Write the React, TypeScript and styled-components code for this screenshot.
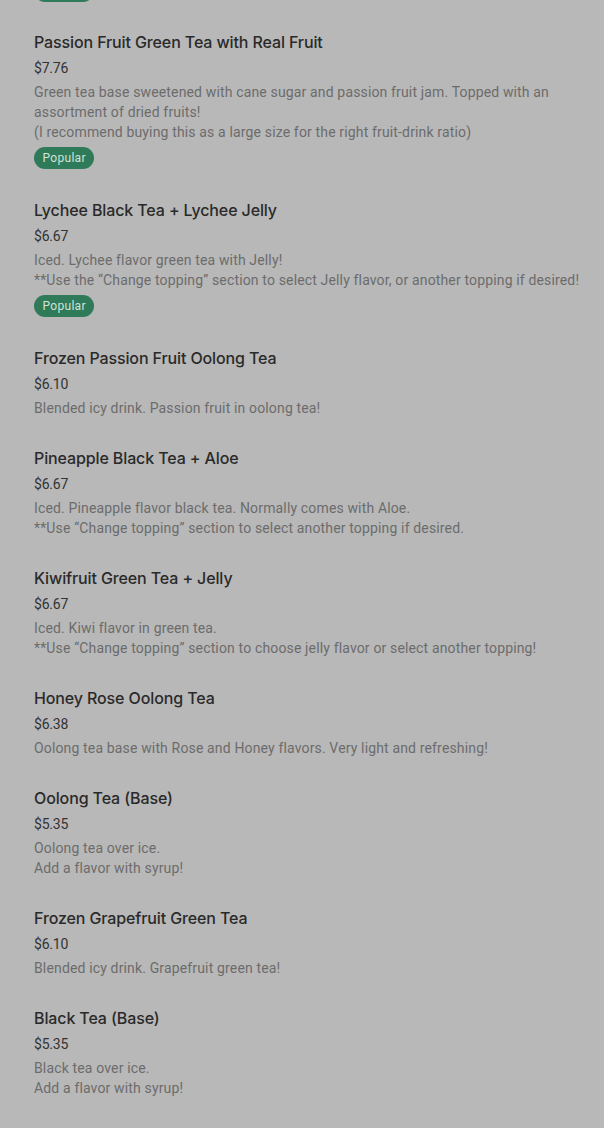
import React from "react";
import styled, { createGlobalStyle } from "styled-components";

const Global = createGlobalStyle`
  html, body { margin: 0; padding: 0; background: #b8b8b8; }
  body { font-family: "Roboto", "Inter", sans-serif; -webkit-font-smoothing: antialiased; }
`;

const Page = styled.div`
  width: 604px;
  height: 1128px;
  overflow: hidden;
  background: #b8b8b8;
  padding: 0 16px 0 34px;
  box-sizing: border-box;
`;

const List = styled.ul`
  list-style: none;
  margin: 0;
  padding: 0;
  display: flex;
  flex-direction: column;
  gap: 28px;
`;

const Item = styled.li`
  display: flex;
  flex-direction: column;
  align-items: flex-start;
`;

const Title = styled.h3`
  margin: 0;
  font-family: "Inter", "Roboto", sans-serif;
  font-size: 16px;
  line-height: 24px;
  font-weight: 500;
  letter-spacing: -0.12px;
  color: #2a2a2a;
`;

const Price = styled.div`
  margin-top: 4px;
  font-size: 14px;
  line-height: 20px;
  color: #333333;
  letter-spacing: -0.2px;
`;

const Desc = styled.p`
  margin: 4px 0 0;
  font-size: 14px;
  line-height: 20px;
  letter-spacing: 0.15px;
  color: #6c6c6c;
  white-space: pre-line;
`;

const Badge = styled.span`
  display: inline-flex;
  align-items: center;
  height: 22px;
  padding: 0 8.5px;
  margin: 5px 0 1px;
  border-radius: 11px;
  background: #2f7a59;
  color: #cfe3d8;
  font-size: 12px;
  line-height: 16px;
  letter-spacing: 0.3px;
`;

const BadgeTail = styled.span`
  display: block;
  width: 60px;
  height: 22px;
  margin-top: -20px;
  border-radius: 11px;
  background: #2f7a59;
`;

type Entry = { title: string; price: string; desc: string; popular?: boolean };

const items: Entry[] = [
  {
    title: "Passion Fruit Green Tea with Real Fruit",
    price: "$7.76",
    desc:
      "Green tea base sweetened with cane sugar and passion fruit jam. Topped with an assortment of dried fruits!\n(I recommend buying this as a large size for the right fruit-drink ratio)",
    popular: true,
  },
  {
    title: "Lychee Black Tea + Lychee Jelly",
    price: "$6.67",
    desc:
      "Iced. Lychee flavor green tea with Jelly!\n**Use the \u201CChange topping\u201D section to select Jelly flavor, or another topping if desired!",
    popular: true,
  },
  {
    title: "Frozen Passion Fruit Oolong Tea",
    price: "$6.10",
    desc: "Blended icy drink. Passion fruit in oolong tea!",
  },
  {
    title: "Pineapple Black Tea + Aloe",
    price: "$6.67",
    desc:
      "Iced. Pineapple flavor black tea. Normally comes with Aloe.\n**Use \u201CChange topping\u201D section to select another topping if desired.",
  },
  {
    title: "Kiwifruit Green Tea + Jelly",
    price: "$6.67",
    desc:
      "Iced. Kiwi flavor in green tea.\n**Use \u201CChange topping\u201D section to choose jelly flavor or select another topping!",
  },
  {
    title: "Honey Rose Oolong Tea",
    price: "$6.38",
    desc: "Oolong tea base with Rose and Honey flavors. Very light and refreshing!",
  },
  {
    title: "Oolong Tea (Base)",
    price: "$5.35",
    desc: "Oolong tea over ice.\nAdd a flavor with syrup!",
  },
  {
    title: "Frozen Grapefruit Green Tea",
    price: "$6.10",
    desc: "Blended icy drink. Grapefruit green tea!",
  },
  {
    title: "Black Tea (Base)",
    price: "$5.35",
    desc: "Black tea over ice.\nAdd a flavor with syrup!",
  },
];

export default function App() {
  return (
    <>
      <Global />
      <Page>
        <List>
          <Item aria-hidden>
            <BadgeTail />
          </Item>
          {items.map((it) => (
            <Item key={it.title}>
              <Title>{it.title}</Title>
              <Price>{it.price}</Price>
              <Desc>{it.desc}</Desc>
              {it.popular && <Badge>Popular</Badge>}
            </Item>
          ))}
        </List>
      </Page>
    </>
  );
}
